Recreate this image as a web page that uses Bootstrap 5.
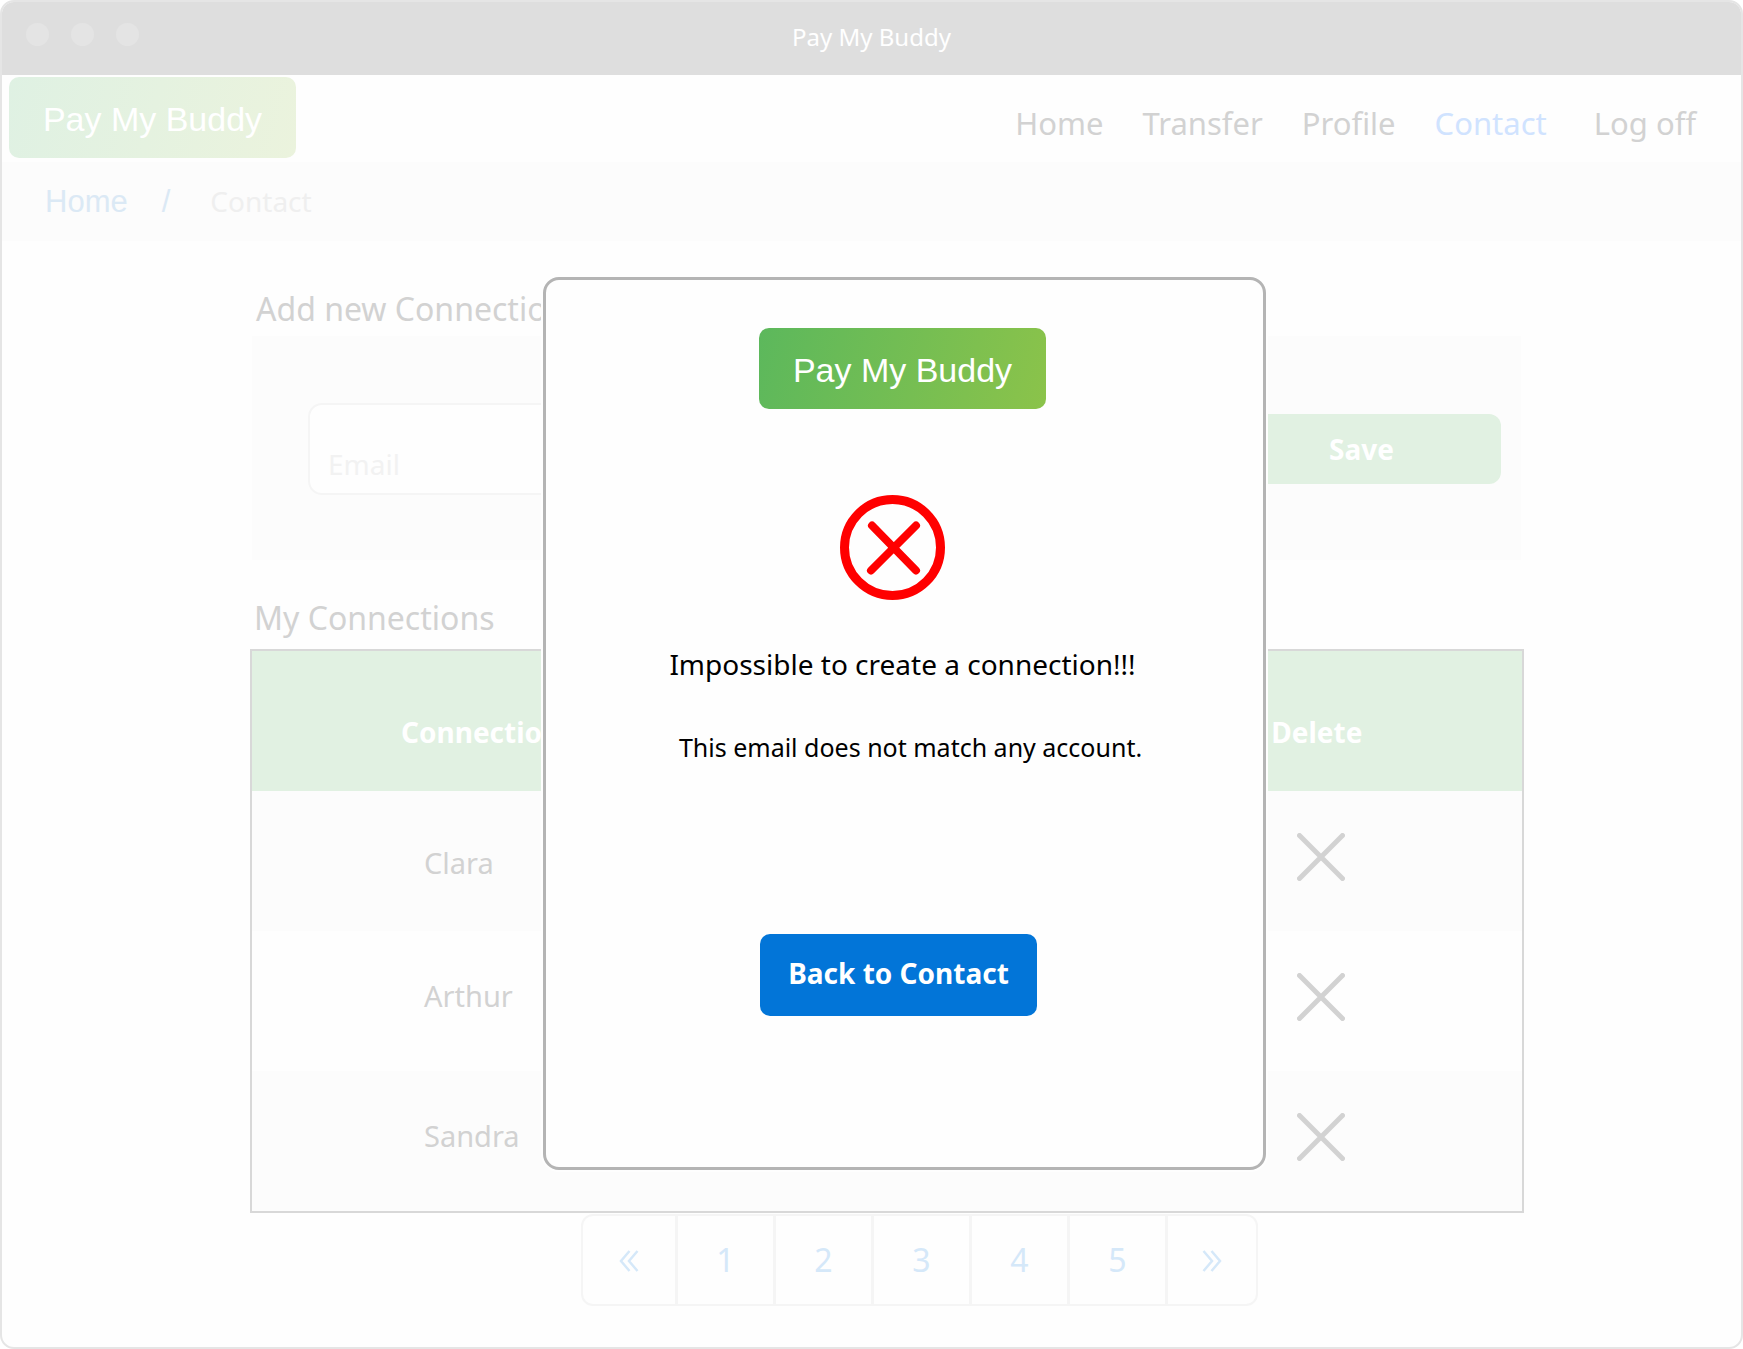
<!DOCTYPE html>
<html lang="en">
<head>
<meta charset="utf-8">
<meta name="viewport" content="width=device-width, initial-scale=1">
<title>Pay My Buddy</title>
<link href="https://cdn.jsdelivr.net/npm/bootstrap@5.3.0/dist/css/bootstrap.min.css" rel="stylesheet">
<style>
  body { font-family: "Noto Sans", sans-serif; background: #fff; color: #d2d2d2; }
  a { text-decoration: none; }
  .app-window { min-height: 100vh; border: 2px solid #e5e5e5; border-radius: 14px; background: #fefefe; overflow: hidden; }
  .title-strip { height: 73px; background: #dedede; color: #fff; font-size: 24px; line-height: 36px; padding-bottom: 4px; }
  .dots { left: 24px; top: 21px; gap: 22px; }
  .dots span { width: 23px; height: 23px; border-radius: 50%; background: #e4e4e4; }
  .brand-tile { width: 287px; height: 81px; border-radius: 10px; font: 34px/40px "Liberation Sans", sans-serif; color: #fff; padding-top: 3px; background: linear-gradient(105deg, #5cb85c, #8bc34a); }
  .brand-faded { background: linear-gradient(105deg, #dff1e3, #ebf3dd); }
  .top-nav { height: 87px; padding: 2px 45px 4px 7px; }
  .top-links { gap: 39px; font-size: 31px; line-height: 42px; padding-top: 25px; }
  .top-links a { color: #d2d2d2; }
  .top-links a.current { color: #d0e3ff; }
  .crumbs { height: 79px; background: #fcfcfc; padding: 0 43px; font: 31px/40px "Liberation Sans", sans-serif; color: #dbe9f5; }
  .crumbs a { color: #dbe9f5; }
  .crumbs .slash { padding: 0 32px 0 34px; }
  .crumbs .here { font: 28px/40px "Noto Sans", sans-serif; color: #efefef; padding: 0 0 2px 8px; }
  .page-main { padding: 46px 217px 0 248px; }
  .section-title { font-size: 32px; line-height: 44px; font-weight: 400; margin: 0; padding: 0 0 0 6px; }
  .add-panel { background: #fcfcfc; margin: 5px 3px 36px 2px; height: 224px; padding: 2px 20px 0 56px; gap: 24px; }
  .email-box { height: 92px; border: 2px solid #f5f5f5; border-radius: 14px; font-size: 28px; padding: 30px 18px 0; background: #fefefe; }
  .email-box::placeholder { color: #f2f2f2; opacity: 1; }
  .btn-save { width: 279px; height: 70px; flex: none; border: 0; border-radius: 12px; background: #e1f1e2; color: #fff; font-size: 28px; font-weight: 700; }
  .list-frame { border: 2px solid #d8d8d8; margin-top: 9px; }
  .list-frame table { margin: 0; --bs-table-bg: transparent; table-layout: fixed; }
  .list-frame th, .list-frame td { height: 140px; padding: 0; border: 0; vertical-align: middle; font-size: 29px; line-height: 40px; color: #d2d2d2; }
  .list-frame thead th { background: #e1f1e2; color: #fff; font-size: 28px; padding-top: 22px; }
  .list-frame tbody tr:nth-child(odd) { background: #fcfcfc; }
  .list-frame thead th:first-child { padding-left: 149px; }
  .list-frame thead th:last-child { padding-right: 4px; }
  .list-frame tbody td:first-child { padding: 3px 0 0 172px; }
  .list-frame tbody tr + tr td:first-child { padding-bottom: 14px; }
  .list-frame tbody td:last-child { padding: 0 0 8px 4px; }
  .col-remove { width: 32%; }
  .btn-remove { border: 0; background: none; padding: 0; line-height: 0; }
  .pager { padding-left: 65px; margin-top: 1px; }
  .pager .pagination { --bs-pagination-border-radius: 12px; margin: 0; }
  .pager .page-link { width: 99px; height: 92px; border: 2px solid #f5f5f5; background: #fefefe; color: #d5e8f9; font-size: 32px; line-height: 88px; padding: 0; text-align: center; }
  .pager .page-item:first-child .page-link { width: 96px; }
  .pager .page-item:last-child .page-link { width: 92px; }
  .pager svg { margin-bottom: 4px; }
  .overlay { padding: 277px 0 0 66px; pointer-events: none; }
  .notice { pointer-events: auto; width: 723px; border: 3px solid #b4b4b4; border-radius: 16px; background: #fefefe; box-shadow: 0 0 0 2px #fefefe; color: #000; padding: 48px 4px 151px 0; }
  .notice .brand-tile { padding-top: 2px; }
  .notice-icon { margin: 86px 20px 0 0; }
  .notice h1 { font-size: 28px; line-height: 40px; font-weight: 400; margin: 44px 0 0; }
  .notice p { font-size: 25px; line-height: 40px; margin: 43px 0 0; }
  .btn-back { width: 277px; height: 82px; margin-top: 167px; border: 0; border-radius: 10px; background: #0275d8; color: #fff; font-size: 28px; line-height: 40px; font-weight: 700; padding: 0 0 4px; }
</style>
<script src="https://cdn.jsdelivr.net/npm/bootstrap@5.3.0/dist/js/bootstrap.bundle.min.js"></script>
</head>
<body class="position-relative">
<div class="app-window">
  <div class="title-strip position-relative d-flex align-items-center justify-content-center">
    <div class="dots position-absolute d-flex"><span></span><span></span><span></span></div>
    <span>Pay My Buddy</span>
  </div>
  <header class="top-nav d-flex justify-content-between align-items-start">
    <a href="#" class="brand-tile brand-faded d-flex align-items-center justify-content-center">Pay My Buddy</a>
    <nav class="top-links d-flex">
      <a href="#">Home</a>
      <a href="#">Transfer</a>
      <a href="#">Profile</a>
      <a href="#" class="current" aria-current="page">Contact</a>
      <a href="#" class="ms-2">Log off</a>
    </nav>
  </header>
  <nav class="crumbs d-flex align-items-center" aria-label="breadcrumb">
    <a href="#">Home</a><span class="slash">/</span><span class="here">Contact</span>
  </nav>
  <main class="page-main">
    <h2 class="section-title">Add new Connection</h2>
    <form class="add-panel d-flex align-items-center">
      <input type="email" class="email-box form-control" placeholder="Email" aria-label="Email">
      <button type="button" class="btn-save">Save</button>
    </form>
    <h2 class="section-title ps-1">My Connections</h2>
    <div class="list-frame">
      <table class="table">
        <thead>
          <tr><th scope="col">Connections</th><th scope="col" class="col-remove text-center">Delete</th></tr>
        </thead>
        <tbody>
          <tr><td>Clara</td><td class="text-center"><button type="button" class="btn-remove" aria-label="Delete Clara"><svg width="48" height="48" viewBox="0 0 48 48" stroke="#d2d2d2" stroke-width="5" stroke-linecap="round"><path d="M2.500 2.500L45.500 45.500M45.500 2.500L2.500 45.500"/></svg></button></td></tr>
          <tr><td>Arthur</td><td class="text-center"><button type="button" class="btn-remove" aria-label="Delete Arthur"><svg width="48" height="48" viewBox="0 0 48 48" stroke="#d2d2d2" stroke-width="5" stroke-linecap="round"><path d="M2.500 2.500L45.500 45.500M45.500 2.500L2.500 45.500"/></svg></button></td></tr>
          <tr><td>Sandra</td><td class="text-center"><button type="button" class="btn-remove" aria-label="Delete Sandra"><svg width="48" height="48" viewBox="0 0 48 48" stroke="#d2d2d2" stroke-width="5" stroke-linecap="round"><path d="M2.500 2.500L45.500 45.500M45.500 2.500L2.500 45.500"/></svg></button></td></tr>
        </tbody>
      </table>
    </div>
    <nav class="pager d-flex justify-content-center" aria-label="Pages">
      <ul class="pagination">
        <li class="page-item"><a class="page-link" href="#" aria-label="Previous"><svg width="22" height="22" viewBox="0 0 22 22" fill="none" stroke="#d5e8f9" stroke-width="2.500"><path d="M11.500 1L3 11L11.500 21M19.500 1L11 11L19.500 21"/></svg></a></li>
        <li class="page-item"><a class="page-link" href="#">1</a></li>
        <li class="page-item"><a class="page-link" href="#">2</a></li>
        <li class="page-item"><a class="page-link" href="#">3</a></li>
        <li class="page-item"><a class="page-link" href="#">4</a></li>
        <li class="page-item"><a class="page-link" href="#">5</a></li>
        <li class="page-item"><a class="page-link" href="#" aria-label="Next"><svg width="22" height="22" viewBox="0 0 22 22" fill="none" stroke="#d5e8f9" stroke-width="2.500"><path d="M2.500 1L11 11L2.500 21M10.500 1L19 11L10.500 21"/></svg></a></li>
      </ul>
    </nav>
  </main>
</div>
<div class="overlay position-absolute top-0 start-0 w-100 d-flex justify-content-center">
  <section class="notice d-flex flex-column align-items-center" role="dialog" aria-labelledby="notice-title">
    <div class="brand-tile d-flex align-items-center justify-content-center">Pay My Buddy</div>
    <svg class="notice-icon" width="105" height="105" viewBox="0 0 105 105" fill="none" stroke="#f00" aria-hidden="true"><circle cx="52.500" cy="52.500" r="48" stroke-width="9"/><path d="M32 30.500L76 75.500M76 30.500L31 75.500" stroke-width="8" stroke-linecap="round"/></svg>
    <h1 id="notice-title">Impossible to create a connection!!!</h1>
    <p class="ps-3">This email does not match any account.</p>
    <button type="button" class="btn-back me-2">Back to Contact</button>
  </section>
</div>
</body>
</html>
